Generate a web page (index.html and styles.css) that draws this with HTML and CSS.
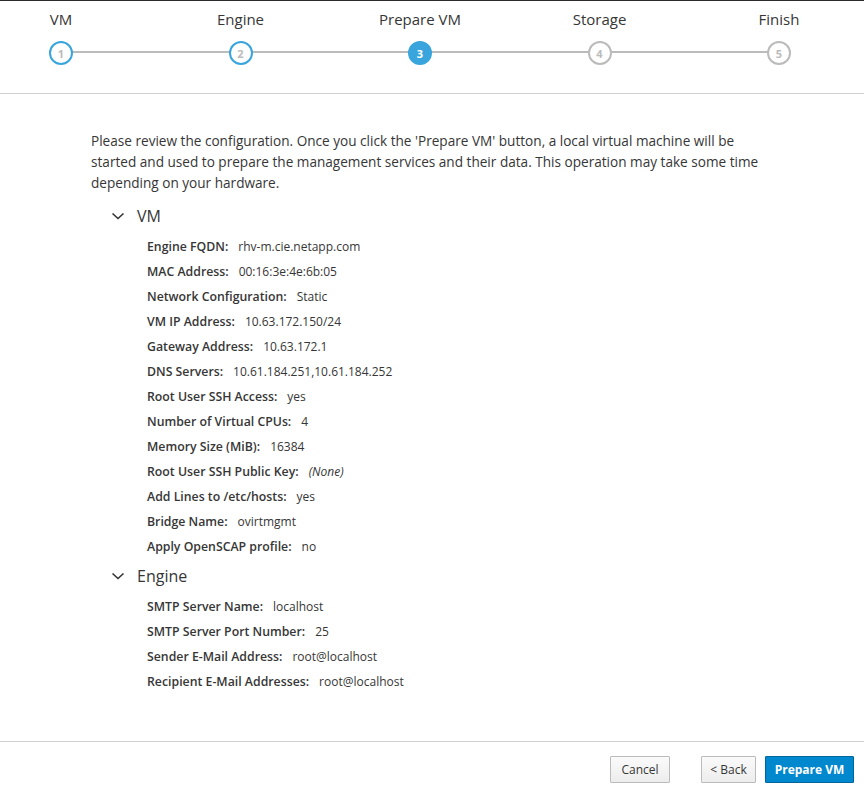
FILE: index.html
```html
<!DOCTYPE html>
<html>
<head>
<meta charset="utf-8">
<link rel="stylesheet" href="styles.css">
</head>
<body>
<div class="wizard">
  <div class="stepper-bar">
    <div class="stepper">
      <div class="step done"><span class="step-label">VM</span><span class="circle">1</span></div>
      <div class="step done"><span class="step-label">Engine</span><span class="circle">2</span></div>
      <div class="step active"><span class="step-label">Prepare VM</span><span class="circle">3</span></div>
      <div class="step"><span class="step-label">Storage</span><span class="circle">4</span></div>
      <div class="step"><span class="step-label">Finish</span><span class="circle">5</span></div>
    </div>
  </div>
  <div class="content">
    <p class="intro">Please review the configuration. Once you click the 'Prepare VM' button, a local virtual machine will be started and used to prepare the management services and their data. This operation may take some time depending on your hardware.</p>
    <div class="section">
      <div class="section-head"><svg class="chev" width="14" height="10" viewBox="0 0 14 10"><path d="M1.5 2.5 L7 7.5 L12.5 2.5" fill="none" stroke="#333" stroke-width="1.6"/></svg><span>VM</span></div>
      <div class="rows">
        <div class="row"><span class="k">Engine FQDN:</span><span class="v">rhv-m.cie.netapp.com</span></div>
        <div class="row"><span class="k">MAC Address:</span><span class="v">00:16:3e:4e:6b:05</span></div>
        <div class="row"><span class="k">Network Configuration:</span><span class="v">Static</span></div>
        <div class="row"><span class="k">VM IP Address:</span><span class="v">10.63.172.150/24</span></div>
        <div class="row"><span class="k">Gateway Address:</span><span class="v">10.63.172.1</span></div>
        <div class="row"><span class="k">DNS Servers:</span><span class="v">10.61.184.251,10.61.184.252</span></div>
        <div class="row"><span class="k">Root User SSH Access:</span><span class="v">yes</span></div>
        <div class="row"><span class="k">Number of Virtual CPUs:</span><span class="v">4</span></div>
        <div class="row"><span class="k">Memory Size (MiB):</span><span class="v">16384</span></div>
        <div class="row"><span class="k">Root User SSH Public Key:</span><span class="v it">(None)</span></div>
        <div class="row"><span class="k">Add Lines to /etc/hosts:</span><span class="v">yes</span></div>
        <div class="row"><span class="k">Bridge Name:</span><span class="v">ovirtmgmt</span></div>
        <div class="row"><span class="k">Apply OpenSCAP profile:</span><span class="v">no</span></div>
      </div>
    </div>
    <div class="section">
      <div class="section-head"><svg class="chev" width="14" height="10" viewBox="0 0 14 10"><path d="M1.5 2.5 L7 7.5 L12.5 2.5" fill="none" stroke="#333" stroke-width="1.6"/></svg><span>Engine</span></div>
      <div class="rows">
        <div class="row"><span class="k">SMTP Server Name:</span><span class="v">localhost</span></div>
        <div class="row"><span class="k">SMTP Server Port Number:</span><span class="v">25</span></div>
        <div class="row"><span class="k">Sender E-Mail Address:</span><span class="v">root@localhost</span></div>
        <div class="row"><span class="k">Recipient E-Mail Addresses:</span><span class="v">root@localhost</span></div>
      </div>
    </div>
  </div>
  <div class="footer">
    <button class="btn btn-default cancel">Cancel</button>
    <button class="btn btn-default back">&lt; Back</button>
    <button class="btn btn-primary">Prepare VM</button>
  </div>
</div>
</body>
</html>
```
FILE: styles.css
```css
html, body {
  margin: 0;
  padding: 0;
  background: #fff;
}
body {
  font-family: "Open Sans", "Liberation Sans", sans-serif;
  color: #363636;
  border-top: 1px solid #2b2b2b;
}
.wizard {
  width: 864px;
}
.stepper-bar {
  border-bottom: 1px solid #d1d1d1;
  box-sizing: border-box;
  height: 93px;
}
.stepper {
  position: relative;
  display: flex;
  justify-content: space-between;
  width: 838px;
  margin-left: 1px;
  padding-top: 8px;
}
.stepper::before {
  content: "";
  position: absolute;
  left: 60px;
  right: 60px;
  top: 50px;
  height: 2px;
  background: #bbbbbb;
}
.step {
  width: 120px;
  display: flex;
  flex-direction: column;
  align-items: center;
  position: relative;
}
.step-label {
  font-size: 15px;
  line-height: 21px;
  color: #363636;
}
.circle {
  margin-top: 11px;
  box-sizing: border-box;
  width: 24px;
  height: 24px;
  border-radius: 50%;
  border: 2px solid #bbbbbb;
  background: #fff;
  color: #bbbbbb;
  font-size: 11px;
  font-weight: 700;
  display: flex;
  align-items: center;
  justify-content: center;
  line-height: 1;
}
.step.done .circle {
  border-color: #39a5dc;
}
.step.active .circle {
  border-color: #39a5dc;
  background: #39a5dc;
  color: #fff;
}
.content {
  padding: 36px 91px 0 91px;
  height: 648px;
  box-sizing: border-box;
  border-bottom: 1px solid #d1d1d1;
}
.intro {
  margin: 0;
  font-size: 13.6px;
  line-height: 21px;
  max-width: 675px;
  color: #363636;
}
.section {
  margin-top: 9px;
}
.section + .section {
  margin-top: 3px;
}
.section-head {
  display: flex;
  align-items: center;
  padding-left: 20px;
  height: 28px;
  font-size: 16px;
  color: #363636;
}
.chev {
  margin-right: 12px;
}
.rows {
  padding-left: 56px;
  padding-top: 4px;
}
.row {
  height: 25px;
  display: flex;
  align-items: center;
  font-size: 12px;
}
.k {
  font-size: 12.3px;
  font-weight: 600;
  margin-right: 10px;
}
.v.it {
  font-style: italic;
}
.footer {
  display: flex;
  justify-content: flex-end;
  align-items: center;
  padding: 14px 10px 0 0;
}
.btn {
  font-family: "Open Sans", "Liberation Sans", sans-serif;
  font-size: 12px;
  height: 27px;
  padding: 0 10px;
  border-radius: 1px;
  cursor: pointer;
}
.btn-default {
  background: linear-gradient(#fafafa, #ededed);
  border: 1px solid #bbbbbb;
  color: #363636;
}
.btn-default.cancel {
  width: 60px;
  padding: 0;
  margin-right: 31px;
}
.btn-default.back {
  width: 55px;
  padding: 0;
}
.btn-primary {
  background: #0088ce;
  border: 1px solid #00659c;
  color: #fff;
  font-weight: 700;
  margin-left: 9px;
  width: 89px;
  padding: 0;
}
```
